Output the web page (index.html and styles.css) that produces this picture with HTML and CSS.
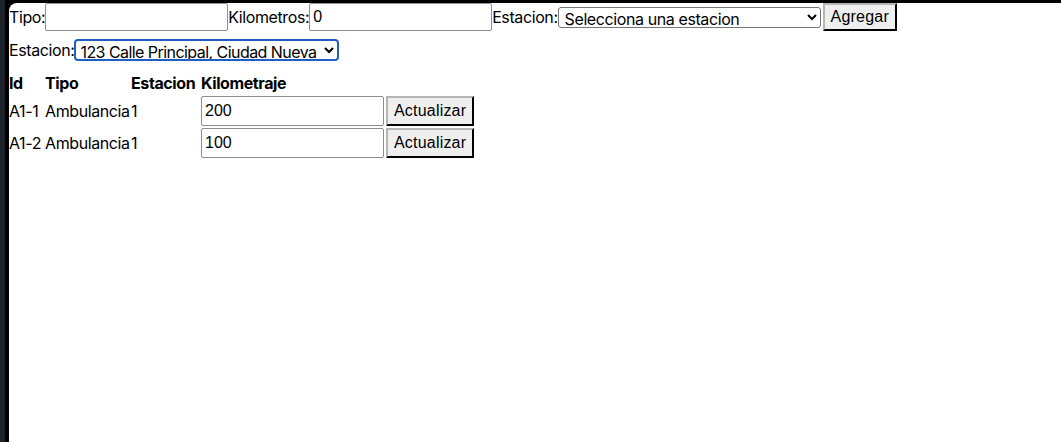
FILE: index.html
```html
<!DOCTYPE html>
<html lang="es">
<head>
<meta charset="utf-8">
<title>Ambulancias</title>
<link rel="stylesheet" href="styles.css">
</head>
<body>
<div class="chrome">
  <div class="edge">
    <main class="page">
      <div class="form-row">
        <label class="lbl">Tipo:</label><input class="field" type="text" value="">
        <label class="lbl">Kilometros:</label><input class="field" type="text" value="0">
        <label class="lbl">Estacion:</label><select class="sel"><option>Selecciona una estacion</option></select>
        <button class="btn add">Agregar</button>
      </div>
      <div class="filter-row">
        <label class="lbl">Estacion:</label><select class="sel focus"><option>123 Calle Principal, Ciudad Nueva</option></select>
      </div>
      <div class="table">
        <div class="th">Id</div><div class="th">Tipo</div><div class="th">Estacion</div><div class="th">Kilometraje</div><div class="th"></div>
        <div class="td">A1-1</div><div class="td">Ambulancia</div><div class="td">1</div><div class="td"><input class="field km" type="text" value="200"></div><div class="td"><button class="btn">Actualizar</button></div>
        <div class="td">A1-2</div><div class="td">Ambulancia</div><div class="td">1</div><div class="td"><input class="field km" type="text" value="100"></div><div class="td"><button class="btn">Actualizar</button></div>
      </div>
    </main>
  </div>
</div>
</body>
</html>
```
FILE: styles.css
```css
html, body {
  margin: 0;
  padding: 0;
  height: 100%;
}
body {
  font-family: Inter, "Liberation Sans", sans-serif;
  font-size: 16px;
  letter-spacing: -0.4px;
  color: #000;
}
.chrome {
  height: 100%;
  background: #1e222b;
  padding-left: 5px;
  box-sizing: border-box;
}
.edge {
  height: 100%;
  background: #000;
  padding-left: 4px;
  padding-top: 3px;
  box-sizing: border-box;
}
.page {
  height: 100%;
  background: #fff;
  border-top-left-radius: 8px;
  box-sizing: border-box;
}
.form-row {
  display: flex;
  align-items: center;
  height: 28px;
}
.lbl {
  white-space: nowrap;
}
.field {
  box-sizing: border-box;
  width: 183px;
  height: 28px;
  border: 1px solid #8f8f8f;
  border-radius: 2px;
  padding: 1px 3px;
  font-family: "Liberation Sans", Arial, sans-serif;
  font-size: 16px;
  letter-spacing: 0;
  color: #000;
  margin: 0;
}
.sel {
  box-sizing: border-box;
  height: 21px;
  width: 263px;
  border: 1px solid #767676;
  border-radius: 3px;
  padding: 0 0 1px 2px;
  line-height: 18px;
  font-family: Inter, "Liberation Sans", sans-serif;
  font-size: 16px;
  letter-spacing: -0.4px;
  background: #fff;
  color: #000;
  margin: 0;
}
.sel.focus {
  width: 265px;
  height: 22px;
  padding: 0;
  line-height: 18px;
  letter-spacing: -0.55px;
  border: 2px solid #1e5fc1;
  border-radius: 4px;
}
.btn {
  box-sizing: border-box;
  height: 28px;
  padding: 1px 6px;
  border: 2px outset #767676;
  border-color: #b5b5b5 #555 #555 #b5b5b5;
  background: #efefef;
  font-family: "Liberation Sans", Arial, sans-serif;
  font-size: 16px;
  letter-spacing: 0.2px;
  color: #000;
  margin: 0;
}
.add {
  margin-left: 2px;
  width: 74px;
}
.filter-row {
  display: flex;
  align-items: center;
  margin-top: 8px;
  height: 22px;
}
.table {
  display: grid;
  grid-template-columns: 36px 86px 70px 185px auto;
  grid-template-rows: 21px 30px 30px;
  row-gap: 2px;
  margin-top: 12px;
  width: max-content;
}
.th {
  grid-row: 1;
  font-weight: 700;
  height: 20px;
  line-height: 20px;
  white-space: nowrap;
}
.td {
  display: flex;
  align-items: center;
  white-space: nowrap;
}
.km {
  height: 30px;
}
.td .btn {
  height: 30px;
  width: 88px;
}
```
